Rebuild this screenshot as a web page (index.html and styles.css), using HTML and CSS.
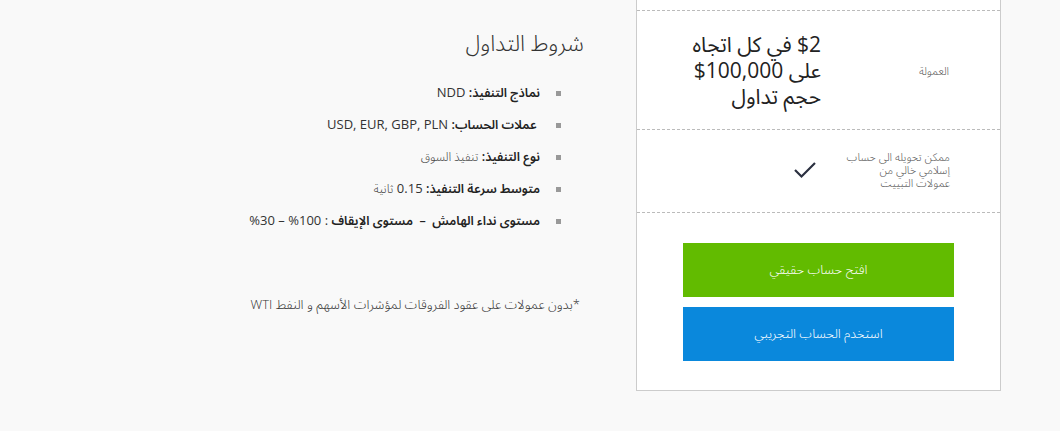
FILE: index.html
```html
<!DOCTYPE html>
<html lang="ar" dir="rtl">
<head>
<meta charset="utf-8">
<link rel="stylesheet" href="styles.css">
</head>
<body>
<div class="page">
  <div class="card">
    <div class="row row-top"></div>
    <div class="row row-commission">
      <div class="label">العمولة</div>
      <div class="value big"><span class="ltr">$2</span> في كل اتجاه<br>على <span class="ltr">$100,000</span><br>حجم تداول</div>
    </div>
    <div class="row row-islamic">
      <div class="label">ممكن تحويله الى حساب<br>إسلامي خالي من<br>عمولات التبييت</div>
      <div class="value">
        <svg class="check" width="24" height="18" viewBox="0 0 24 18"><path d="M2 9 L8.5 15.5 L22 2" fill="none" stroke="#2b3040" stroke-width="2.2"/></svg>
      </div>
    </div>
    <div class="actions">
      <a class="btn btn-green" href="#">افتح حساب حقيقي</a>
      <a class="btn btn-blue" href="#">استخدم الحساب التجريبي</a>
    </div>
  </div>
  <div class="terms">
    <h2 class="title">شروط التداول</h2>
    <ul class="list">
      <li><span><b>نماذج التنفيذ:</b> NDD</span></li>
      <li><span>&nbsp;<b>عملات الحساب:</b> USD, EUR, GBP, PLN</span></li>
      <li><span><b>نوع التنفيذ:</b> <small>تنفيذ السوق</small></span></li>
      <li><span><b>متوسط سرعة التنفيذ:</b> 0.15 <small>ثانية</small></span></li>
      <li><span><b>مستوى نداء الهامش &nbsp;– &nbsp;مستوى الإيقاف</b> : 100% – 30%</span></li>
    </ul>
    <p class="note">*بدون عمولات على عقود الفروقات لمؤشرات الأسهم و النفط WTI</p>
  </div>
</div>
</body>
</html>
```

FILE: styles.css
```css
html, body {
  margin: 0;
  padding: 0;
  background: #f9f9f9;
  font-family: "Open Sans", "Noto Sans Arabic", sans-serif;
  color: #333;
}

.page {
  display: flex;
  direction: rtl;
  align-items: flex-start;
  gap: 52px;
  padding-right: 59px;
}

.ltr {
  direction: ltr;
  unicode-bidi: isolate;
}

.card {
  width: 365px;
  box-sizing: border-box;
  background: #fff;
  border: 1px solid #ccc;
  border-top: none;
  flex-shrink: 0;
}

.row {
  display: flex;
  align-items: center;
  border-bottom: 1px dashed #bbb;
}

.row-top { height: 10px; }
.row-commission { height: 118px; }
.row-islamic { height: 82px; }

.label {
  width: 179px;
  box-sizing: border-box;
  padding-right: 51px;
  font-size: 11px;
  line-height: 13px;
  font-weight: 300;
  color: #555;
  flex-shrink: 0;
}

.row-islamic .label { padding-right: 50px; padding-top: 2px; margin-top: -6px; }

.value { flex: 1; }

.big {
  font-size: 21px;
  line-height: 26px;
  color: #222;
}

.check {
  display: block;
  margin-right: 4px;
  margin-top: -2px;
}

.actions {
  display: flex;
  flex-direction: column;
  gap: 10px;
  padding: 30px 46px 29px;
}

.btn {
  display: flex;
  align-items: center;
  justify-content: center;
  height: 54px;
  color: #fff;
  font-size: 13px;
  font-weight: 300;
  text-decoration: none;
}

.btn-green { background: #62bb00; }
.btn-blue { background: #0a88dc; }

.terms {
  padding-top: 28px;
}

.title {
  margin: 0;
  font-size: 22px;
  line-height: 28px;
  font-weight: 300;
  color: #333;
}

.list {
  list-style: none;
  margin: 21px 0 0;
  padding: 0;
}

.list li {
  display: flex;
  align-items: center;
  height: 32px;
  padding-right: 23px;
  font-size: 13px;
  color: #333;
}

.list li::before {
  content: "";
  width: 5px;
  height: 5px;
  background: #999;
  margin-left: 16px;
  flex-shrink: 0;
}

.list b { font-size: 12.5px; font-weight: 600; color: #222; }
.list small { font-size: 12px; font-weight: 300; color: #444; }

.note {
  margin: 59px 4px 0 0;
  font-size: 13px;
  line-height: 16px;
  font-weight: 300;
  color: #333;
}
```
